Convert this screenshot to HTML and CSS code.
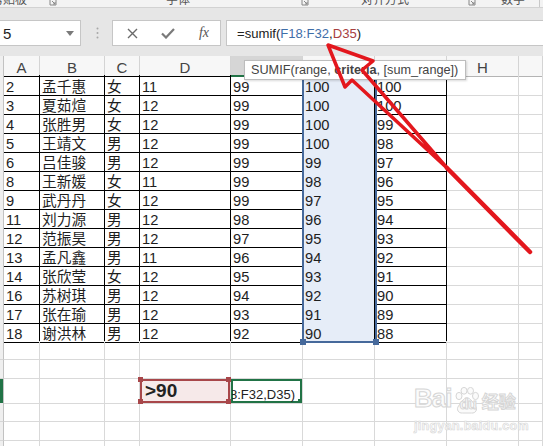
FILE: index.html
```html
<!DOCTYPE html>
<html lang="zh-CN">

<head>
    <meta charset="utf-8">
    <title>sumif</title>
    <link rel="stylesheet" href="styles.css">
</head>

<body>
    <div class="app">

        <div class="ribbon">
            <span class="r1">剪贴板</span>
            <svg class="launch r2" width="8" height="8" viewBox="0 0 8 8"><path d="M1 1h6v6H1z M3 3l3 3 M6 4v2H4" fill="none" stroke="#888"/></svg>
            <span class="r3">字体</span>
            <svg class="launch r4" width="8" height="8" viewBox="0 0 8 8"><path d="M1 1h6v6H1z M3 3l3 3 M6 4v2H4" fill="none" stroke="#888"/></svg>
            <span class="r5">对齐方式</span>
            <svg class="launch r6" width="8" height="8" viewBox="0 0 8 8"><path d="M1 1h6v6H1z M3 3l3 3 M6 4v2H4" fill="none" stroke="#888"/></svg>
            <span class="r7">数字</span>
            <i class="rsep"></i>
        </div>

        <div class="fbar">
            <div class="namebox">
                <span>5</span>
                <svg width="8" height="5" viewBox="0 0 8 5"><path d="M0 0h8L4 5z" fill="#7a7a7a"/></svg>
            </div>
            <div class="grip">
                <svg width="3" height="12" viewBox="0 0 3 12"><circle cx="1.5" cy="1.5" r="1" fill="#a8a8a8"/><circle cx="1.5" cy="6" r="1" fill="#a8a8a8"/><circle cx="1.5" cy="10.5" r="1" fill="#a8a8a8"/></svg>
            </div>
            <div class="btns">
                <svg width="11" height="11" viewBox="0 0 11 11"><path d="M1 1l9 9M10 1l-9 9" stroke="#6a6a6a" stroke-width="1.4"/></svg>
                <svg width="14" height="11" viewBox="0 0 14 11"><path d="M1 5.5l4 4L13 1" fill="none" stroke="#7a7a7a" stroke-width="2.2"/></svg>
                <span class="fx">fx</span>
            </div>
            <div class="formula">=sumif(<span class="ref-f">F18:F32</span>,<span class="ref-d">D35</span>)</div>
        </div>

        <div class="sheet">
            <!-- E, F, G headers sit under the function tooltip -->
            <div class="row head">
                <div class="rh"></div>
                <div class="c">A</div><div class="c">B</div><div class="c">C</div><div class="c">D</div>
                <div class="c on"></div><div class="c"></div><div class="c"></div><div class="c">H</div><div class="c"></div>
            </div>

            <div class="row data"><div class="rh"></div><div class="c">2</div><div class="c">孟千惠</div><div class="c">女</div><div class="c">11</div><div class="c">99</div><div class="c">100</div><div class="c">100</div><div class="c"></div><div class="c"></div></div>
            <div class="row data"><div class="rh"></div><div class="c">3</div><div class="c">夏茹煊</div><div class="c">女</div><div class="c">12</div><div class="c">99</div><div class="c">100</div><div class="c">100</div><div class="c"></div><div class="c"></div></div>
            <div class="row data"><div class="rh"></div><div class="c">4</div><div class="c">张胜男</div><div class="c">女</div><div class="c">12</div><div class="c">99</div><div class="c">100</div><div class="c">99</div><div class="c"></div><div class="c"></div></div>
            <div class="row data"><div class="rh"></div><div class="c">5</div><div class="c">王靖文</div><div class="c">男</div><div class="c">12</div><div class="c">99</div><div class="c">100</div><div class="c">98</div><div class="c"></div><div class="c"></div></div>
            <div class="row data"><div class="rh"></div><div class="c">6</div><div class="c">吕佳骏</div><div class="c">男</div><div class="c">12</div><div class="c">99</div><div class="c">99</div><div class="c">97</div><div class="c"></div><div class="c"></div></div>
            <div class="row data"><div class="rh"></div><div class="c">8</div><div class="c">王新媛</div><div class="c">女</div><div class="c">11</div><div class="c">99</div><div class="c">98</div><div class="c">96</div><div class="c"></div><div class="c"></div></div>
            <div class="row data"><div class="rh"></div><div class="c">9</div><div class="c">武丹丹</div><div class="c">女</div><div class="c">12</div><div class="c">99</div><div class="c">97</div><div class="c">95</div><div class="c"></div><div class="c"></div></div>
            <div class="row data"><div class="rh"></div><div class="c">11</div><div class="c">刘力源</div><div class="c">男</div><div class="c">12</div><div class="c">98</div><div class="c">96</div><div class="c">94</div><div class="c"></div><div class="c"></div></div>
            <div class="row data"><div class="rh"></div><div class="c">12</div><div class="c">范振昊</div><div class="c">男</div><div class="c">12</div><div class="c">97</div><div class="c">95</div><div class="c">93</div><div class="c"></div><div class="c"></div></div>
            <div class="row data"><div class="rh"></div><div class="c">13</div><div class="c">孟凡鑫</div><div class="c">男</div><div class="c">11</div><div class="c">96</div><div class="c">94</div><div class="c">92</div><div class="c"></div><div class="c"></div></div>
            <div class="row data"><div class="rh"></div><div class="c">14</div><div class="c">张欣莹</div><div class="c">女</div><div class="c">12</div><div class="c">95</div><div class="c">93</div><div class="c">91</div><div class="c"></div><div class="c"></div></div>
            <div class="row data"><div class="rh"></div><div class="c">16</div><div class="c">苏树琪</div><div class="c">男</div><div class="c">12</div><div class="c">94</div><div class="c">92</div><div class="c">90</div><div class="c"></div><div class="c"></div></div>
            <div class="row data"><div class="rh"></div><div class="c">17</div><div class="c">张在瑜</div><div class="c">男</div><div class="c">12</div><div class="c">93</div><div class="c">91</div><div class="c">89</div><div class="c"></div><div class="c"></div></div>
            <div class="row data"><div class="rh"></div><div class="c">18</div><div class="c">谢洪林</div><div class="c">男</div><div class="c">12</div><div class="c">92</div><div class="c">90</div><div class="c">88</div><div class="c"></div><div class="c"></div></div>

            <div class="row"><div class="rh"></div><div class="c"></div><div class="c"></div><div class="c"></div><div class="c"></div><div class="c"></div><div class="c"></div><div class="c"></div><div class="c"></div><div class="c"></div></div>
            <div class="row"><div class="rh"></div><div class="c"></div><div class="c"></div><div class="c"></div><div class="c"></div><div class="c"></div><div class="c"></div><div class="c"></div><div class="c"></div><div class="c"></div></div>
            <div class="row tall">
                <div class="rh on"></div><div class="c"></div><div class="c"></div><div class="c"></div>
                <div class="c crit">&gt;90</div>
                <div class="c edit"><span class="clip"><bdi>=sumif(F18:F32,D35)</bdi></span></div>
                <div class="c"></div><div class="c"></div><div class="c"></div><div class="c"></div>
            </div>
            <div class="row"><div class="rh"></div><div class="c"></div><div class="c"></div><div class="c"></div><div class="c"></div><div class="c"></div><div class="c"></div><div class="c"></div><div class="c"></div><div class="c"></div></div>
            <div class="row"><div class="rh"></div><div class="c"></div><div class="c"></div><div class="c"></div><div class="c"></div><div class="c"></div><div class="c"></div><div class="c"></div><div class="c"></div><div class="c"></div></div>
            <div class="row"><div class="rh"></div><div class="c"></div><div class="c"></div><div class="c"></div><div class="c"></div><div class="c"></div><div class="c"></div><div class="c"></div><div class="c"></div><div class="c"></div></div>
        </div>

        <!-- range picked for the first argument -->
        <div class="fsel"></div>

        <div class="tip">SUMIF(range, <b>criteria</b>, [sum_range])</div>

        <svg class="arrow" width="543" height="446" viewBox="0 0 543 446">
            <path d="M352 80L345 87L328 45L373 61L362 70L447 168Z" fill="none" stroke="#e3171d" stroke-width="3.5" stroke-linejoin="round"/>
            <path d="M447 168L530 252" stroke="#e3171d" stroke-width="4.5" stroke-linecap="round"/>
        </svg>

        <div class="mark">
            <div class="logo">
                <span>Bai</span>
                <svg class="paw" width="24" height="27" viewBox="0 0 24 27">
                    <g fill="#fbfbfb" stroke="#d6d6d6" stroke-width="1">
                        <ellipse cx="4" cy="9" rx="3" ry="3.6"/>
                        <ellipse cx="9" cy="3.8" rx="3" ry="3.4"/>
                        <ellipse cx="15.5" cy="3.8" rx="3" ry="3.4"/>
                        <ellipse cx="20.5" cy="9" rx="3" ry="3.6"/>
                        <path d="M12 11c-4 0-6 5-8.5 8-2.5 3.5 0 7.5 4 7h9c4 .5 6.5-3.5 4-7-2.5-3-4.5-8-8.5-8z"/>
                    </g>
                </svg>
                <span class="du">du</span>
                <span class="jy">经验</span>
            </div>
            <div class="url">jingyan.baidu.com</div>
        </div>

    </div>
</body>

</html>
```

FILE: styles.css
```css
* {
    box-sizing: border-box;
}

body {
    margin: 0;
    background: #fff;
    font-family: "Liberation Sans", "Noto Sans CJK SC", sans-serif;
}

.app {
    position: relative;
    width: 543px;
    height: 446px;
    overflow: hidden;
}

/* ribbon, only the bottom of the group labels shows */
.ribbon {
    display: flex;
    height: 8px;
    overflow: hidden;
    background: #f3f3f3;
    border-bottom: 1px solid #d2d2d2;
    font-family: "Noto Sans CJK SC", sans-serif;
    font-size: 12px;
    color: #555;
}

.ribbon span {
    line-height: 12px;
    margin-top: -7px;
    white-space: nowrap;
}

.launch {
    flex: none;
    margin-top: -2px;
}

.r1 { margin-left: -9px; }
.r2 { margin-left: 22px; }
.r3 { margin-left: 109px; }
.r4 { margin-left: 111px; }
.r5 { margin-left: 52px; }
.r6 { margin-left: 59px; }
.r7 { margin-left: 25px; }

.rsep {
    width: 1px;
    margin-left: 14px;
    background: #c8c8c8;
}

/* formula bar */
.fbar {
    display: flex;
    height: 48px;
    padding: 12px 0 10px;
    background: #e6e6e6;
}

.namebox {
    display: flex;
    align-items: center;
    justify-content: space-between;
    width: 83px;
    margin-left: -2px;
    padding: 0 6px 0 4px;
    background: #fff;
    border: 1px solid #c6c6c6;
    font-size: 15px;
    color: #222;
}

.grip {
    display: flex;
    align-items: center;
    width: 3px;
    margin-left: 15px;
}

.btns {
    display: grid;
    grid-template-columns: repeat(3, 36px);
    align-items: center;
    justify-items: center;
    width: 109px;
    margin-left: 13px;
    padding-left: 1px;
    background: #fff;
    border: 1px solid #c6c6c6;
}

.fx {
    font-family: "Liberation Serif", serif;
    font-style: italic;
    font-size: 14px;
    color: #555;
}

.formula {
    flex: 1;
    display: flex;
    align-items: center;
    margin-left: 5px;
    padding-left: 10px;
    background: #fff;
    border: 1px solid #c6c6c6;
    border-right: 0;
    font-size: 13.1px;
    color: #222;
    white-space: nowrap;
}

.ref-f {
    color: #3f6ea8;
}

.ref-d {
    color: #a8403f;
}

/* grid */
.row {
    display: grid;
    grid-template-columns: 4px 36px 65px 35px 91px 72px 72px 72px 72px 24px;
    height: 19px;
}

.row.tall {
    height: 24px;
}

.rh {
    background: #efefef;
    border-right: 1px solid #c2c2c2;
    border-bottom: 1px solid #d6d6d6;
}

.rh.on {
    background: #dcdcdc;
    box-shadow: inset 3px 0 #217346;
}

.c {
    padding: 4px 2px 0;
    border-right: 1px solid #d9d9d9;
    border-bottom: 1px solid #d9d9d9;
    font-size: 14.7px;
    line-height: 16px;
    color: #1e1e1e;
    white-space: nowrap;
}

.head .c {
    background: #f7f7f7;
    border-right-color: #d4d4d4;
    border-bottom-color: #b4b4b4;
    text-align: center;
    font-size: 15px;
    color: #444;
}

.head .c:nth-child(-n+8) {
    border-bottom-color: #000;
}

.head .c.on {
    background: #d6d6d6;
    border-bottom: 2px solid #217346;
}

.data .c:nth-child(-n+8) {
    border-right-color: #000;
    border-bottom-color: #000;
}

.data .c:nth-child(7) {
    background: #e6edf8;
}

.tall .c {
    padding-top: 8px;
}

.crit {
    position: relative;
    padding-left: 5px;
    background: #f6e9e9;
    box-shadow: inset 0 0 0 2px #a8474a;
    font-size: 19px;
    font-weight: bold;
    color: #222;
}

.tall .crit {
    padding-top: 4px;
}

.crit::before {
    content: "";
    position: absolute;
    left: -2px;
    top: -2px;
    width: 5px;
    height: 5px;
    background: #a8474a;
    box-shadow: 88px 0 #a8474a, 0 22px #a8474a, 88px 22px #a8474a;
}

/* cell in edit mode, start of the formula runs off to the left */
.edit {
    position: relative;
    padding-left: 1px;
    padding-right: 7px;
    box-shadow: inset 0 0 0 2px #217346;
    font-size: 13px;
    color: #222;
}

.edit .clip {
    display: block;
    overflow: hidden;
    direction: rtl;
    text-align: right;
}

.edit bdi {
    direction: ltr;
}

.edit::after {
    content: "";
    position: absolute;
    right: 0;
    bottom: 0;
    width: 4px;
    height: 4px;
    background: #217346;
}

/* overlays */
.fsel {
    position: absolute;
    left: 302px;
    top: 70px;
    width: 75px;
    height: 273px;
    border: 2px solid #46699b;
}

.fsel::before,
.fsel::after {
    content: "";
    position: absolute;
    bottom: -4px;
    width: 6px;
    height: 6px;
    background: #46699b;
}

.fsel::before {
    left: -4px;
}

.fsel::after {
    right: -4px;
}

.tip {
    position: absolute;
    left: 244px;
    top: 60px;
    width: 222px;
    height: 20px;
    padding-left: 6px;
    background: #fff;
    border: 1px solid #bdbdbd;
    box-shadow: 1px 1px 2px rgba(0, 0, 0, 0.15);
    font-size: 12.7px;
    line-height: 18px;
    color: #444;
    white-space: nowrap;
}

.arrow {
    position: absolute;
    left: 0;
    top: 0;
    pointer-events: none;
}

.mark {
    position: absolute;
    left: 414px;
    top: 384px;
    color: #fbfbfb;
    -webkit-text-stroke: 1px #d6d6d6;
}

.logo {
    display: flex;
    align-items: flex-end;
    height: 30px;
    font-size: 26px;
    font-weight: bold;
    letter-spacing: -1px;
}

.paw {
    margin-left: 4px;
}

.du {
    margin-left: -20px;
    font-size: 15px;
    line-height: 20px;
}

.jy {
    margin-left: 6px;
    font-family: "Noto Sans CJK SC", sans-serif;
    font-size: 17px;
    line-height: 26px;
    letter-spacing: 0;
}

.url {
    margin-top: 5px;
    font-size: 12.5px;
    font-weight: bold;
    letter-spacing: 0.3px;
    -webkit-text-stroke: 0.6px #d6d6d6;
}
```
